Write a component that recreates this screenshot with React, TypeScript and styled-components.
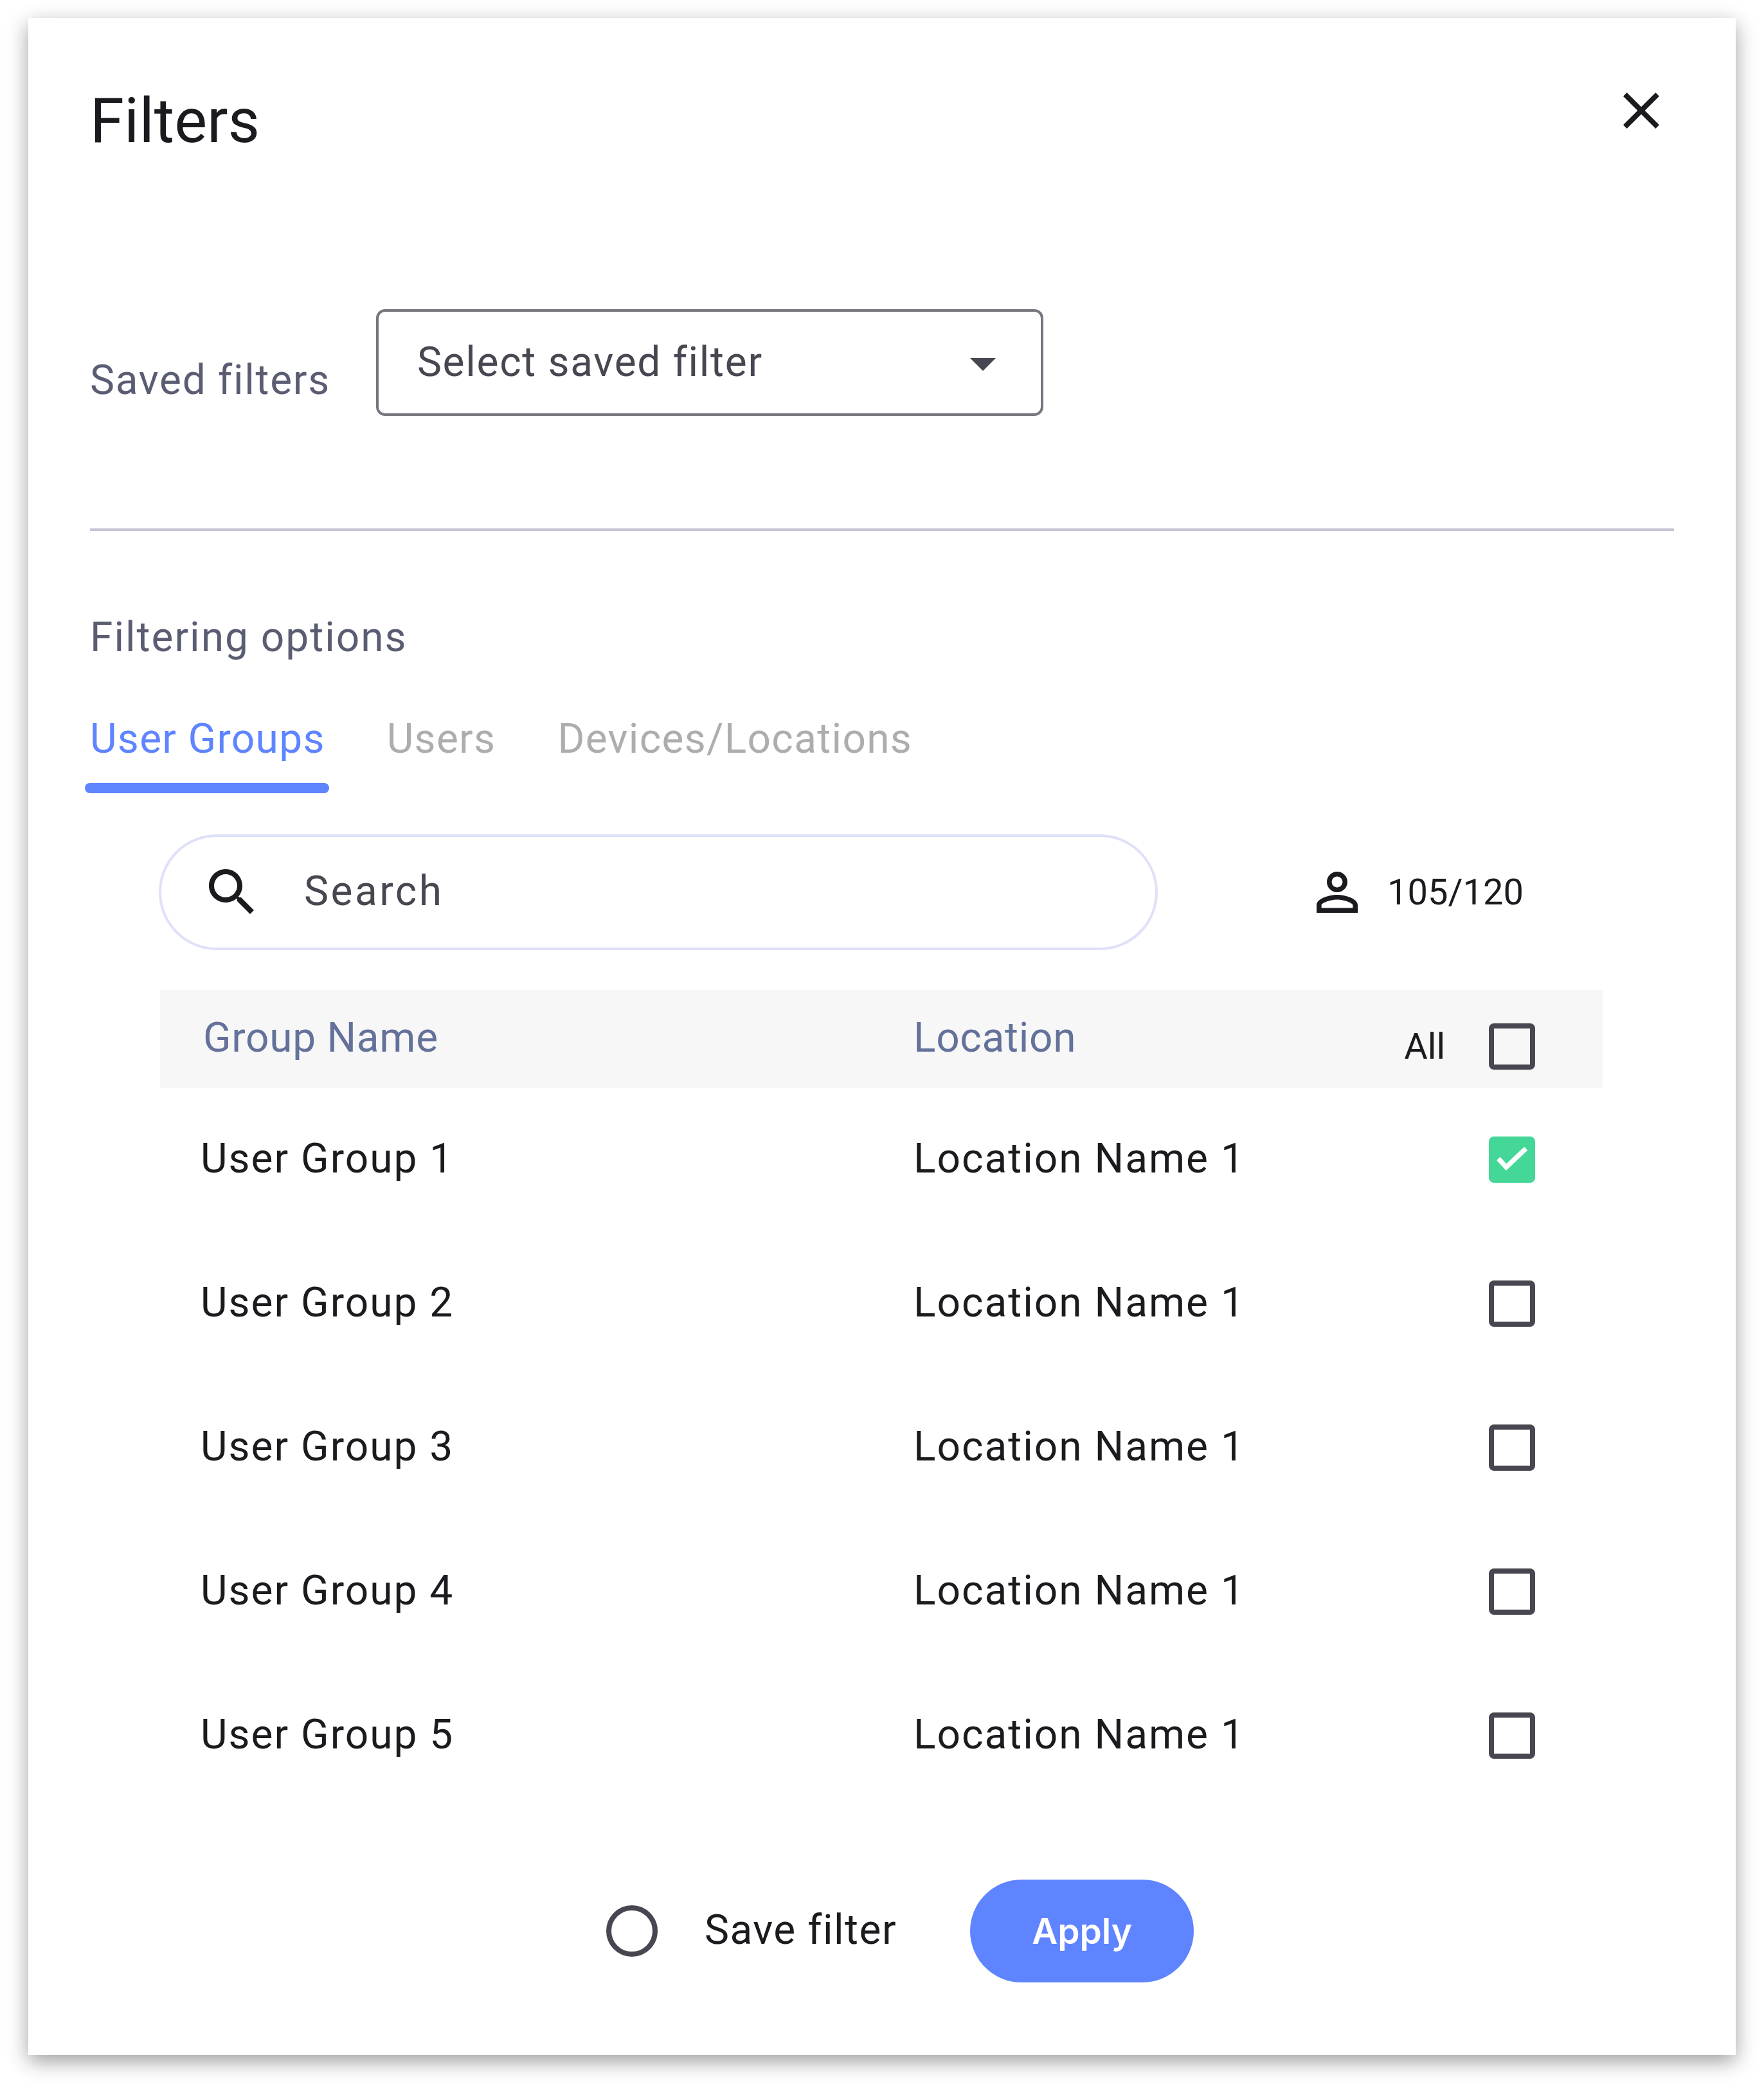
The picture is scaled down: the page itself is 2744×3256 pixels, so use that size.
import { createGlobalStyle } from "styled-components";
import styled from "styled-components";

const GlobalStyle = createGlobalStyle`
    html, body {
        margin: 0;
        padding: 0;
        background: #ffffff;
    }
    * {
        box-sizing: border-box;
    }
`;

const Page = styled.div`
    padding: 28px 44px 59px;
    font-family: Roboto, "Liberation Sans", sans-serif;
`;

const Card = styled.div`
    width: 2656px;
    height: 3169px;
    padding: 96px 96px 0;
    background: #ffffff;
    box-shadow: 0 10px 30px rgba(0, 0, 0, 0.38);
`;

const Header = styled.div`
    display: flex;
    justify-content: space-between;
    align-items: flex-start;
    height: 96px;
`;

const Title = styled.h1`
    margin: 0;
    font-size: 96px;
    font-weight: 400;
    line-height: 128px;
    color: #1b1b1f;
`;

const CloseIcon = styled.svg`
    width: 96px;
    height: 96px;
    margin-right: 3px;
    fill: #1b1b1f;
`;

const SavedRow = styled.div`
    display: flex;
    align-items: flex-end;
    gap: 71px;
    margin-top: 261px;
`;

const SavedLabel = styled.span`
    font-size: 64px;
    line-height: 84px;
    letter-spacing: 1.7px;
    color: #5a5d72;
    padding-bottom: 13px;
`;

const SelectBox = styled.div`
    position: relative;
    width: 1038px;
    height: 166px;
    padding: 0 60px 2px;
    display: flex;
    align-items: center;
    border: 4px solid #76767f;
    border-radius: 14px;
    font-size: 64px;
    letter-spacing: 1.7px;
    color: #474751;
`;

const CaretIcon = styled.svg`
    position: absolute;
    top: 32px;
    right: 42px;
    width: 96px;
    height: 96px;
    fill: #474751;
`;

const Divider = styled.div`
    height: 4px;
    margin-top: 175px;
    background: #c5c6d2;
`;

const SectionLabel = styled.div`
    margin-top: 124px;
    font-size: 64px;
    line-height: 84px;
    letter-spacing: 2px;
    color: #5a5d72;
`;

const Tabs = styled.div`
    display: flex;
    gap: 96px;
    margin-top: 74px;
`;

const Tab = styled.div<{ $active?: boolean }>`
    position: relative;
    font-size: 64px;
    line-height: 84px;
    letter-spacing: 1.3px;
    color: ${(p) => (p.$active ? "#5f84ff" : "#adadad")};

    ${(p) =>
        p.$active &&
        `
        &::after {
            content: "";
            position: absolute;
            left: -8px;
            right: -6px;
            top: 110px;
            height: 16px;
            border-radius: 8px;
            background: #5f84ff;
        }
    `}
`;

const Toolbar = styled.div`
    display: flex;
    align-items: center;
    margin: 106px 0 0 107px;
`;

const SearchBox = styled.div`
    display: flex;
    align-items: center;
    width: 1554px;
    height: 180px;
    padding-left: 62px;
    border: 4px solid #dfe1f9;
    border-radius: 90px;
`;

const SearchIcon = styled.svg`
    width: 96px;
    height: 96px;
    margin-right: 64px;
    fill: #1b1b1f;
`;

const SearchText = styled.span`
    padding-bottom: 3px;
    font-size: 64px;
    letter-spacing: 3.5px;
    color: #474751;
`;

const Counter = styled.div`
    display: flex;
    align-items: center;
    gap: 30px;
    margin-left: 231px;
    font-size: 56px;
    color: #1b1b1f;
`;

const PersonIcon = styled.svg`
    width: 96px;
    height: 96px;
    fill: #1b1b1f;
`;

const Table = styled.div`
    width: 2244px;
    margin: 62px 0 0 109px;
`;

const HeadRow = styled.div`
    display: grid;
    grid-template-columns: 1105px 1fr auto;
    align-items: center;
    height: 152px;
    padding: 0 105px 0 67px;
    background: #f7f7f7;
`;

const BodyRow = styled.div`
    display: grid;
    grid-template-columns: 1109px 1fr 72px;
    align-items: center;
    height: 224px;
    padding: 0 105px 0 63px;
`;

const HeadCell = styled.span`
    padding-bottom: 3px;
    font-size: 64px;
    letter-spacing: 0.7px;
    color: #64719a;
`;

const Cell = styled.span`
    padding-bottom: 3px;
    font-size: 64px;
    letter-spacing: 2px;
    color: #1b1b1f;
`;

const AllGroup = styled.div`
    display: flex;
    align-items: center;
    gap: 68px;
    margin-top: 24px;
`;

const AllLabel = styled.span`
    font-size: 56px;
    color: #1b1b1f;
`;

const Checkbox = styled.span<{ $checked?: boolean }>`
    display: flex;
    align-items: center;
    justify-content: center;
    width: 72px;
    height: 72px;
    border: ${(p) => (p.$checked ? "none" : "8px solid #474751")};
    border-radius: 8px;
    background: ${(p) => (p.$checked ? "#44d797" : "transparent")};
`;

const CheckIcon = styled.svg`
    width: 72px;
    height: 72px;
    fill: none;
    stroke: #ffffff;
    stroke-width: 7.5;
`;

const Footer = styled.div`
    display: flex;
    align-items: center;
    justify-content: center;
    margin-top: 112px;
    padding-left: 56px;
`;

const Radio = styled.span`
    width: 80px;
    height: 80px;
    border: 8px solid #474751;
    border-radius: 50%;
`;

const SaveLabel = styled.span`
    margin: 0 114px 0 73px;
    padding-bottom: 3px;
    font-size: 64px;
    letter-spacing: 1.5px;
    color: #1b1b1f;
`;

const ApplyButton = styled.button`
    width: 348px;
    height: 160px;
    padding: 0;
    border: none;
    border-radius: 80px;
    background: #5f84ff;
    font-family: Inter, sans-serif;
    font-size: 55px;
    font-weight: 600;
    color: #ffffff;
`;

const groups = [1, 2, 3, 4, 5];

export default function App() {
    return (
        <Page>
            <GlobalStyle />
            <Card>
                <Header>
                    <Title>Filters</Title>
                    <CloseIcon viewBox="0 0 24 24">
                        <path d="M19 6.41L17.59 5 12 10.59 6.41 5 5 6.41 10.59 12 5 17.59 6.41 19 12 13.41 17.59 19 19 17.59 13.41 12z" />
                    </CloseIcon>
                </Header>

                <SavedRow>
                    <SavedLabel>Saved filters</SavedLabel>
                    <SelectBox>
                        Select saved filter
                        <CaretIcon viewBox="0 0 24 24">
                            <path d="M7 10l5 5 5-5z" />
                        </CaretIcon>
                    </SelectBox>
                </SavedRow>

                <Divider />

                <SectionLabel>Filtering options</SectionLabel>
                <Tabs>
                    <Tab $active>User Groups</Tab>
                    <Tab>Users</Tab>
                    <Tab>Devices/Locations</Tab>
                </Tabs>

                <Toolbar>
                    <SearchBox>
                        <SearchIcon viewBox="0 0 24 24">
                            <path d="M15.5 14h-.79l-.28-.27C15.41 12.59 16 11.11 16 9.5 16 5.91 13.09 3 9.5 3S3 5.91 3 9.5 5.91 16 9.5 16c1.61 0 3.09-.59 4.23-1.57l.27.28v.79l5 4.99L20.49 19l-4.99-5zm-6 0C7.01 14 5 11.99 5 9.5S7.01 5 9.5 5 14 7.01 14 9.5 11.99 14 9.5 14z" />
                        </SearchIcon>
                        <SearchText>Search</SearchText>
                    </SearchBox>
                    <Counter>
                        <PersonIcon viewBox="0 0 24 24">
                            <path d="M12 5.9c1.16 0 2.1.94 2.1 2.1s-.94 2.1-2.1 2.1S9.9 9.16 9.9 8s.94-2.1 2.1-2.1m0 9c2.97 0 6.1 1.46 6.1 2.1v1.1H5.9V17c0-.64 3.13-2.1 6.1-2.1M12 4C9.79 4 8 5.79 8 8s1.79 4 4 4 4-1.79 4-4-1.79-4-4-4zm0 9c-2.67 0-8 1.34-8 4v3h16v-3c0-2.66-5.33-4-8-4z" />
                        </PersonIcon>
                        105/120
                    </Counter>
                </Toolbar>

                <Table>
                    <HeadRow>
                        <HeadCell>Group Name</HeadCell>
                        <HeadCell>Location</HeadCell>
                        <AllGroup>
                            <AllLabel>All</AllLabel>
                            <Checkbox />
                        </AllGroup>
                    </HeadRow>
                    {groups.map((n) => (
                        <BodyRow key={n}>
                            <Cell>User Group {n}</Cell>
                            <Cell>Location Name 1</Cell>
                            <Checkbox $checked={n === 1}>
                                {n === 1 && (
                                    <CheckIcon viewBox="0 0 72 72">
                                        <polyline points="14.8,34.4 27,47.7 57.7,18.7" />
                                    </CheckIcon>
                                )}
                            </Checkbox>
                        </BodyRow>
                    ))}
                </Table>

                <Footer>
                    <Radio />
                    <SaveLabel>Save filter</SaveLabel>
                    <ApplyButton>Apply</ApplyButton>
                </Footer>
            </Card>
        </Page>
    );
}
